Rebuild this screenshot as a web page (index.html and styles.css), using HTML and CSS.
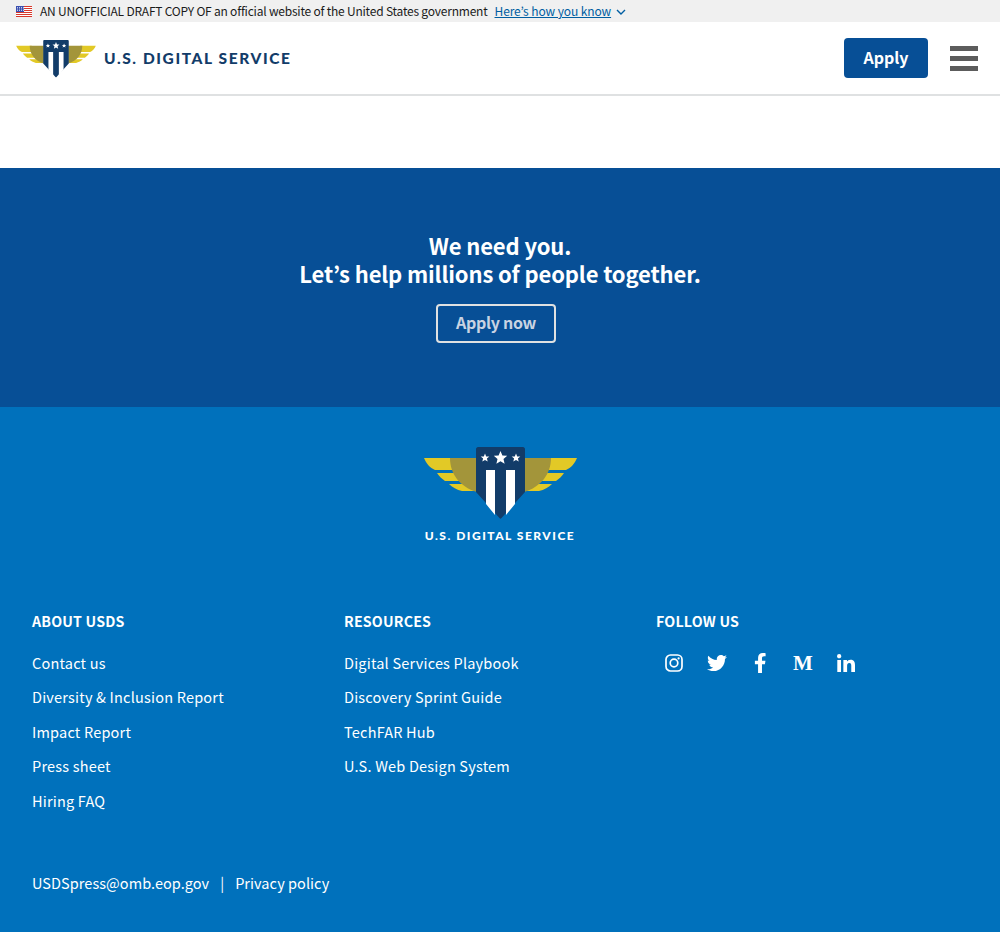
FILE: index.html
```html
<!DOCTYPE html>
<html lang="en">
<head>
    <meta charset="UTF-8">
    <meta name="viewport" content="width=device-width, initial-scale=1.0">
    <title>U.S. Digital Service</title>
    <link rel="stylesheet" href="styles.css">
</head>
<body>
    <svg class="defs" width="0" height="0" aria-hidden="true">
        <symbol id="usds-mark" viewBox="0 0 153 73">
            <path fill="#e2c926" d="M0 11H30V23H11C6 21 2 16 0 11zM13 26H38V34H21C18 32 15 29 13 26zM25 37H50V44H38C33 43 28 40 25 37z"/>
            <path fill="#e2c926" d="M153 11H123V23H142C147 21 151 16 153 11zM140 26H115V34H132C135 32 138 29 140 26zM128 37H103V44H115C120 43 125 40 128 37z"/>
            <path fill="#a3953a" d="M26 11H53V45C36 40 26 27 26 11zM127 11H100V45C117 40 127 27 127 11z"/>
            <path fill="#123c69" d="M54 0H99C100 0 101 1 101 2V45L77.500 71C76.800 72 76.200 72 75.500 71L52 45V2C52 1 53 0 54 0z"/>
            <path fill="#fff" d="M62 23H71V68L62 57zM82 23H91V57L82 68z"/>
            <path fill="#fff" d="M61 6.500L62.200 9.400 65.300 9.600 62.900 11.600 63.700 14.600 61 13 58.300 14.600 59.100 11.600 56.700 9.600 59.800 9.400zM76.500 4L78.400 8.500 83.200 8.800 79.500 12 80.600 16.700 76.500 14.200 72.400 16.700 73.500 12 69.800 8.800 74.600 8.500zM92 6.500L93.200 9.400 96.300 9.600 93.900 11.600 94.700 14.600 92 13 89.300 14.600 90.100 11.600 87.700 9.600 90.800 9.400z"/>
        </symbol>
    </svg>

    <div class="gov-banner">
        <svg class="flag" viewBox="0 0 16 11">
            <rect width="16" height="11" fill="#fff"/>
            <path stroke="#d8382c" stroke-width="1" d="M0 .5H16M0 2.500H16M0 4.500H16M0 6.500H16M0 8.500H16M0 10.500H16"/>
            <rect width="8" height="6" fill="#3a4fb0"/>
            <path stroke="#fff" stroke-width=".7" stroke-dasharray="1 1" d="M1 1.500H8M1 3H8M1 4.500H8"/>
        </svg>
        <span class="banner-text">AN UNOFFICIAL DRAFT COPY OF an official website of the United States government</span>
        <a class="know-link" href="#">Here’s how you know</a>
        <svg class="chevron" viewBox="0 0 10 6"><path fill="none" stroke="#005ea2" stroke-width="1.400" d="M1 1l4 4 4-4"/></svg>
    </div>

    <header class="site-header">
        <a class="logo" href="#">
            <svg class="logo-mark"><use href="#usds-mark"/></svg>
            <span class="logo-text">U.S. DIGITAL SERVICE</span>
        </a>
        <div class="header-actions">
            <a class="btn-apply" href="#">Apply</a>
            <button class="menu-btn" aria-label="Menu"><span></span><span></span><span></span></button>
        </div>
    </header>

    <div class="spacer"></div>

    <section class="cta">
        <h2>We need you.<br>Let’s help millions of people together.</h2>
        <a class="btn-outline" href="#">Apply now</a>
    </section>

    <footer class="site-footer">
        <div class="footer-logo">
            <svg class="footer-mark"><use href="#usds-mark"/></svg>
            <span class="footer-logo-text">U.S. DIGITAL SERVICE</span>
        </div>

        <div class="footer-cols">
            <div>
                <h3>ABOUT USDS</h3>
                <ul>
                    <li><a href="#">Contact us</a></li>
                    <li><a href="#">Diversity &amp; Inclusion Report</a></li>
                    <li><a href="#">Impact Report</a></li>
                    <li><a href="#">Press sheet</a></li>
                    <li><a href="#">Hiring FAQ</a></li>
                </ul>
            </div>
            <div>
                <h3>RESOURCES</h3>
                <ul>
                    <li><a href="#">Digital Services Playbook</a></li>
                    <li><a href="#">Discovery Sprint Guide</a></li>
                    <li><a href="#">TechFAR Hub</a></li>
                    <li><a href="#">U.S. Web Design System</a></li>
                </ul>
            </div>
            <div>
                <h3>FOLLOW US</h3>
                <div class="social">
                    <a href="#" aria-label="Instagram">
                        <svg viewBox="0 0 18 18" fill="none" stroke="#fff" stroke-width="1.700">
                            <rect x="1" y="1" width="16" height="16" rx="4.500"/>
                            <circle cx="9" cy="9" r="3.800"/>
                            <circle cx="13.600" cy="4.400" r="1.100" fill="#fff" stroke="none"/>
                        </svg>
                    </a>
                    <a href="#" aria-label="Twitter">
                        <svg class="tw" viewBox="0 0 512 512"><path fill="#fff" d="M459.37 151.716c.325 4.548.325 9.097.325 13.645 0 138.72-105.583 298.558-298.558 298.558-59.452 0-114.68-17.219-161.137-47.106 8.447.974 16.568 1.299 25.34 1.299 49.055 0 94.213-16.568 130.274-44.832-46.132-.975-84.792-31.188-98.112-72.772 6.498.974 12.995 1.624 19.818 1.624 9.421 0 18.843-1.3 27.614-3.573-48.081-9.747-84.143-51.98-84.143-102.985v-1.299c13.969 7.797 30.214 12.67 47.431 13.319-28.264-18.843-46.781-51.005-46.781-87.391 0-19.492 5.197-37.36 14.294-52.954 51.655 63.675 129.3 105.258 216.365 109.807-1.624-7.797-2.599-15.918-2.599-24.04 0-57.828 46.782-104.934 104.934-104.934 30.213 0 57.502 12.67 76.67 33.137 23.715-4.548 46.456-13.32 66.599-25.34-7.798 24.366-24.366 44.833-46.132 57.827 21.117-2.273 41.584-8.122 60.426-16.243-14.292 20.791-32.161 39.308-52.628 54.253z"/></svg>
                    </a>
                    <a href="#" aria-label="Facebook">
                        <svg class="fb" viewBox="0 0 320 512"><path fill="#fff" d="M279.14 288l14.22-92.66h-88.91v-60.13c0-25.35 12.42-50.06 52.24-50.06h40.42V6.26S260.43 0 225.36 0c-73.22 0-121.08 44.38-121.08 124.72v70.62H22.89V288h81.39v224h100.17V288z"/></svg>
                    </a>
                    <a class="medium" href="#" aria-label="Medium">M</a>
                    <a href="#" aria-label="LinkedIn">
                        <svg viewBox="0 0 448 448"><path fill="#fff" d="M100.28 448H7.4V148.9h92.88zM53.79 108.1C24.09 108.1 0 83.5 0 53.8a53.79 53.79 0 0 1 107.58 0c0 29.7-24.1 54.3-53.79 54.3zM447.9 448h-92.68V302.4c0-34.7-.7-79.2-48.29-79.2-48.29 0-55.69 37.7-55.69 76.7V448h-92.78V148.9h89.08v40.8h1.3c12.4-23.5 42.69-48.3 87.88-48.3 94 0 111.28 61.9 111.28 142.3V448z"/></svg>
                    </a>
                </div>
            </div>
        </div>

        <div class="footer-bottom">
            <a href="#">USDSpress@omb.eop.gov</a>
            <span class="sep">|</span>
            <a href="#">Privacy policy</a>
        </div>
    </footer>
</body>
</html>
```

FILE: styles.css
```css
* { box-sizing: border-box; }
body { margin: 0; font-family: "Noto Sans CJK JP", "Open Sans", sans-serif; color: #1b1b1b; background-color: #fff; }
a { color: inherit; text-decoration: none; }
.defs { position: absolute; }

.gov-banner { height: 22px; padding-left: 16px; display: flex; align-items: center; background-color: #f0f0f0; font-size: 12px; line-height: 22px; letter-spacing: -.21px; }
.flag { width: 16px; height: 11px; margin-right: 8px; }
.know-link { margin-left: 7px; color: #005ea2; text-decoration: underline; letter-spacing: -.1px; }
.chevron { width: 10px; height: 6px; margin-left: 5px; margin-top: 1px; }

.site-header { height: 74px; padding: 0 22px 0 16px; display: flex; align-items: center; justify-content: space-between; border-bottom: 2px solid #dfe1e2; }
.logo { display: flex; align-items: center; margin-top: 2px; }
.logo-mark { width: 80px; height: 38px; margin-right: 8px; }
.logo-text { font-family: "Lato", sans-serif; font-weight: 900; font-size: 15.500px; letter-spacing: 1.600px; color: #123c69; white-space: nowrap; margin-top: -2px; }
.header-actions { display: flex; align-items: center; gap: 22px; }
.btn-apply { width: 84px; height: 40px; padding-bottom: 3px; display: flex; align-items: center; justify-content: center; background-color: #074f96; color: #fff; font-weight: 700; font-size: 16px; border-radius: 4px; }
.menu-btn { width: 28px; padding: 0; border: none; background: none; display: flex; flex-direction: column; gap: 5px; }
.menu-btn span { display: block; height: 5px; background-color: #5c5c5c; }

.spacer { height: 72px; }

.cta { height: 239px; padding-top: 63px; background-color: #074f96; color: #fff; text-align: center; }
.cta h2 { margin: 0 0 17px; font-size: 22px; line-height: 28px; font-weight: 700; letter-spacing: -.13px; }
.btn-outline { display: inline-flex; align-items: center; justify-content: center; width: 120px; height: 39px; margin-right: 8px; padding-bottom: 4px; border: 2px solid #dfe1e2; border-radius: 4px; color: #c9d3e2; font-size: 16px; font-weight: 700; letter-spacing: -.3px; }

.site-footer { height: 525px; padding: 40px 32px 0; background-color: #0071bc; color: #fff; }
.footer-logo { display: flex; flex-direction: column; align-items: center; }
.footer-mark { width: 153px; height: 73px; }
.footer-logo-text { margin-top: 8px; font-family: "Lato", sans-serif; font-weight: 900; font-size: 12px; line-height: 16px; letter-spacing: 1.500px; white-space: nowrap; }

.footer-cols { display: grid; grid-template-columns: repeat(3, 312px); margin-top: 65px; font-size: 14.500px; letter-spacing: .2px; }
.footer-cols h3 { margin: 0 0 17.800px; font-size: 14.200px; line-height: 24px; font-weight: 700; }
.footer-cols ul { margin: 0; padding: 0; list-style: none; }
.footer-cols li { height: 34.500px; line-height: 24px; }

.social { display: flex; align-items: center; height: 24px; margin-top: 2.200px; padding-left: 9px; gap: 25px; }
.social a { display: flex; align-items: center; justify-content: center; width: 18px; height: 20px; }
.social svg { width: 18px; height: 18px; }
.social .tw { width: 20px; height: 20px; flex: none; }
.social .fb { width: 12.500px; height: 20px; }
.social .medium { font-family: "Liberation Serif", serif; font-weight: 700; font-size: 21px; line-height: 20px; letter-spacing: 0; }

.footer-bottom { display: flex; margin-top: 48.200px; font-size: 14.500px; line-height: 24px; letter-spacing: .05px; }
.sep { margin: 0 11px; }
```
